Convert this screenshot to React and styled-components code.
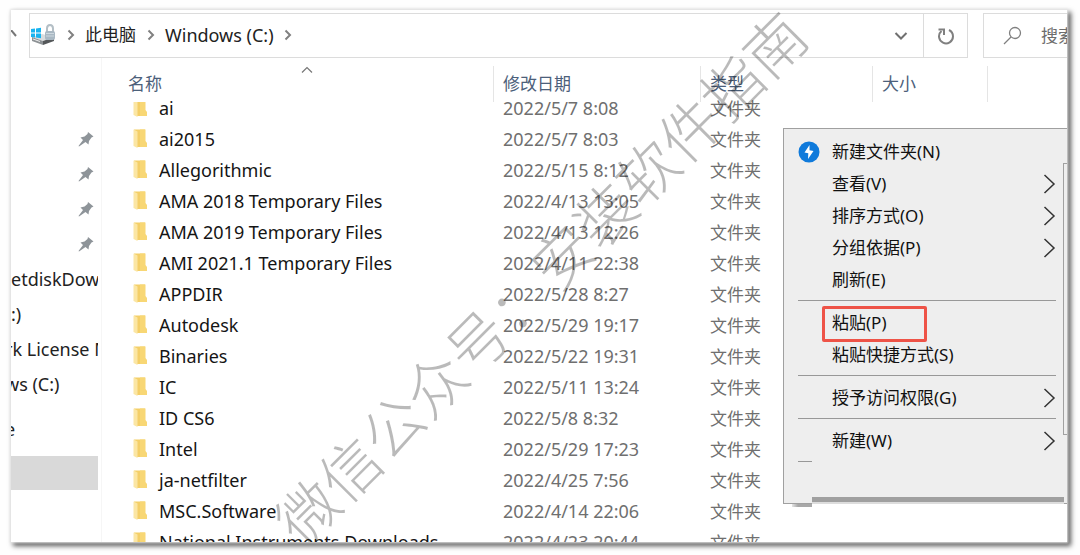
import React from "react";
import styled, { createGlobalStyle } from "styled-components";

const GlobalStyle = createGlobalStyle`
  * {
    box-sizing: border-box;
  }

  body {
    margin: 0;
    background: #fefefe;
    font-family: "Noto Sans", "Noto Sans CJK SC", sans-serif;
  }

  button,
  input {
    margin: 0;
    padding: 0;
    border: 0;
    background: none;
    font: inherit;
    color: inherit;
  }
`;

const Page = styled.div`
  height: 100vh;
  padding: 10px 13px 13px 11px;
  overflow: hidden;
`;

const Window = styled.main`
  position: relative;
  display: flex;
  flex-direction: column;
  height: 100%;
  overflow: hidden;
  background: #fff;
`;

const Frame = styled.div`
  height: 100%;
  box-shadow:
    0 0 2px 1px #e6e6e6,
    3px 3px 5px 1px rgba(0, 0, 0, 0.65);
`;

const Toolbar = styled.div`
  display: flex;
  flex: none;
  height: 48px;
  padding-top: 3px;
`;

const UpArrow = styled.div`
  display: flex;
  align-items: center;
  width: 18px;
  height: 42px;
`;

const AddressBar = styled.nav`
  display: flex;
  flex: 1;
  align-items: center;
  height: 45px;
  border: 1px solid #dcdcdc;
  color: #222;
`;

const Crumb = styled.a`
  padding-bottom: 2px;
  font-size: ${(props) => (props.$latin ? 18 : 17)}px;
  line-height: 24px;
  color: inherit;
  text-decoration: none;
`;

const CrumbGap = styled.span`
  display: flex;
  justify-content: center;
  width: 29px;
  padding-bottom: 2px;
`;

const HistoryButton = styled.button`
  display: flex;
  align-items: center;
  justify-content: center;
  width: 44px;
  height: 43px;
  margin-left: auto;
`;

const RefreshButton = styled(HistoryButton)`
  margin-left: 0;
  border-left: 1px solid #dcdcdc;
`;

const SearchBox = styled.label`
  display: flex;
  align-items: center;
  gap: 19px;
  width: 84px;
  height: 45px;
  margin-left: 15px;
  padding-left: 19px;
  border: 1px solid #dcdcdc;
  border-right: 0;
  overflow: hidden;
`;

const SearchIcon = styled.svg`
  flex: none;
`;

const SearchInput = styled.input`
  width: 60px;
  flex: none;
  font-size: 17px;

  &::placeholder {
    color: #6d6d6d;
    opacity: 1;
  }
`;

const Body = styled.div`
  display: flex;
  flex: 1;
  min-height: 0;
`;

const Sidebar = styled.aside`
  flex: none;
  width: 87px;
  padding-top: 63px;
  overflow: hidden;
`;

const SideRow = styled.div`
  display: flex;
  align-items: center;
  justify-content: ${(props) => (props.$pinned ? "flex-end" : "flex-start")};
  height: ${(props) => (props.$selected ? 34 : 35)}px;
  margin-top: ${(props) => (props.$spaced ? 10 : 0)}px;
  margin-left: ${(props) => (props.$cut ? -6 : 0)}px;
  padding-right: ${(props) => (props.$pinned ? 4 : 0)}px;
  background: ${(props) => (props.$selected ? "#d9d9d9" : "transparent")};
  font-size: 18px;
  white-space: nowrap;
  color: #222;
`;

const FilePane = styled.section`
  flex: 1;
  min-width: 0;
  margin-left: 3px;
  border-left: 1px solid #f6f6f6;
  overflow: hidden;
`;

const FileTable = styled.table`
  width: 100%;
  table-layout: fixed;
  border-collapse: collapse;
`;

const Col = styled.col`
  width: ${(props) => props.$width}px;
`;

const HeadCell = styled.th`
  position: relative;
  height: 35px;
  padding: 17px 0 0 ${(props) => (props.$first ? 26 : 9)}px;
  font-size: 17px;
  font-weight: 400;
  line-height: 18px;
  text-align: left;
  color: #4c607a;

  /* column splitter, reaches down over the first row */
  &::after {
    content: "";
    position: absolute;
    top: 8px;
    right: 0;
    width: 1px;
    height: 36px;
    background: #e5e5e5;
  }

  &:last-child::after {
    display: none;
  }
`;

const SortMark = styled.svg`
  position: absolute;
  top: 8px;
  left: 199px;
`;

const NameCell = styled.td`
  height: 31px;
  padding: 0 0 0 31px;
  font-size: 18px;
  line-height: 31px;
  white-space: nowrap;
  color: #151515;
`;

const NameBox = styled.div`
  display: flex;
  align-items: center;
  gap: 11px;
  height: 31px;
`;

const MetaCell = styled.td`
  height: 31px;
  padding: 0 0 0 9px;
  font-size: ${(props) => (props.$cjk ? 17 : 18)}px;
  line-height: 31px;
  white-space: nowrap;
  color: #6f6f6f;
`;

const Watermark = styled.div`
  position: absolute;
  top: 50%;
  left: 50%;
  transform: translate(-50%, -50%) rotate(-45deg);
  font-family: "Noto Sans CJK SC", sans-serif;
  font-size: 60px;
  font-weight: 300;
  line-height: 60px;
  white-space: nowrap;
  color: rgba(0, 0, 0, 0.27);
  pointer-events: none;
`;

const Menu = styled.div`
  position: absolute;
  top: 118px;
  right: 0;
  width: 284px;
  height: 376px;
  padding-top: 7px;
  border: 1px solid #a0a0a0;
  border-right: 0;
  background: #eee;
`;

const MenuItem = styled.button`
  position: relative;
  display: flex;
  align-items: center;
  width: 100%;
  height: 32px;
  padding-right: 11px;
  font-size: 17px;
  line-height: 32px;
  text-align: left;
  color: #111;
`;

const MenuIcon = styled.span`
  display: flex;
  align-items: center;
  width: 48px;
  padding-left: 14px;
`;

const MenuArrow = styled.svg`
  margin-left: auto;
`;

const Highlight = styled.span`
  position: absolute;
  top: -1px;
  left: 38px;
  width: 105px;
  height: 36px;
  border: 3px solid #ee5347;
  border-radius: 2px;
`;

const MenuLine = styled.hr`
  width: ${(props) => (props.$short ? "14px" : "auto")};
  height: 1px;
  margin: 4px 11px 6px 14px;
  border: 0;
  background: #989898;
`;

const MenuEdge = styled.span`
  position: absolute;
  top: 34px;
  right: 0;
  width: 4px;
  height: 272px;
  border: 1px solid #a0a0a0;
  border-right: 0;
`;

const MenuShadow = styled.span`
  position: absolute;
  bottom: -4px;
  left: 8px;
  width: 20px;
  height: 3px;
  background: linear-gradient(to right, rgba(0, 0, 0, 0.1), #a8a8a8 6px);
`;

const MenuBar = styled.span`
  position: absolute;
  right: 3px;
  bottom: -1px;
  left: 28px;
  height: 7px;
  border-bottom: 2px solid #ddd;
  background: #a0a0a0;
`;

const files = [
  ["ai", "2022/5/7 8:08"],
  ["ai2015", "2022/5/7 8:03"],
  ["Allegorithmic", "2022/5/15 8:12"],
  ["AMA 2018 Temporary Files", "2022/4/13 13:05"],
  ["AMA 2019 Temporary Files", "2022/4/13 12:26"],
  ["AMI 2021.1 Temporary Files", "2022/4/11 22:38"],
  ["APPDIR", "2022/5/28 8:27"],
  ["Autodesk", "2022/5/29 19:17"],
  ["Binaries", "2022/5/22 19:31"],
  ["IC", "2022/5/11 13:24"],
  ["ID CS6", "2022/5/8 8:32"],
  ["Intel", "2022/5/29 17:23"],
  ["ja-netfilter", "2022/4/25 7:56"],
  ["MSC.Software", "2022/4/14 22:06"],
  ["National Instruments Downloads", "2022/4/23 20:44"],
];

const menuGroups = [
  [
    { label: "新建文件夹(N)", icon: true },
    { label: "查看(V)", arrow: true },
    { label: "排序方式(O)", arrow: true },
    { label: "分组依据(P)", arrow: true },
    { label: "刷新(E)" },
  ],
  [{ label: "粘贴(P)", marked: true }, { label: "粘贴快捷方式(S)" }],
  [{ label: "授予访问权限(G)", arrow: true }],
  [{ label: "新建(W)", arrow: true }],
];

const CrumbArrow = () => (
  <svg width="8" height="12" viewBox="0 0 8 12" fill="none">
    <path d="M1.5 1.5L6 6L1.5 10.5" stroke="#808080" strokeWidth="2" />
  </svg>
);

const DriveIcon = () => (
  <svg width="26" height="24" viewBox="0 0 26 24">
    <path d="M2 13L12 10L24 13L13 17Z" fill="#d9dcde" />
    <path d="M2 13L13 17V21L2 17Z" fill="#8d9295" />
    <path d="M13 17L24 13V17L13 21Z" fill="#55585a" />
    <path d="M3 15L10 17.5" stroke="#eee" strokeWidth="1" />
    <path
      d="M17 8V4.5Q17 1 20 1Q23 1 23 4.5V8"
      fill="none"
      stroke="#b4bfc6"
      strokeWidth="2"
    />
    <rect x="15" y="7" width="10" height="9" rx="2" fill="#a9b8c3" />
    <path d="M16 9.5H24M16 12H24" stroke="#cdd8df" strokeWidth="1" />
    <path d="M1 5L5 4.5V8.5H1Z" fill="#18b4f0" />
    <path d="M6 4.4L11 3.8V8.5H6Z" fill="#18b4f0" />
    <path d="M1 9.5H5V13.5L1 13Z" fill="#18b4f0" />
    <path d="M6 9.5H11V14.2L6 13.6Z" fill="#18b4f0" />
  </svg>
);

const PinIcon = () => (
  <svg width="16" height="16" viewBox="0 0 16 16">
    <path
      d="M10 1L15.5 5.5L13.5 6.5L11 10L10.5 13.5L7.5 11L1 15.5L0.5 15L5 9L2.5 6.5L6.5 5.5L9.5 3Z"
      fill="#8e9499"
    />
  </svg>
);

const FolderIcon = ({ clipped }) => (
  <svg width="15" height="22" viewBox="0 0 15 22">
    {clipped ? (
      <>
        <path d="M1 4H12V13L14 15V18H4Z" fill="#f4cf68" />
        <path d="M7 4H12.5V12L14 14V18H7Z" fill="#f8d775" />
        <path d="M0.5 4H4.5V19L0.5 17Z" fill="#fbe6a4" />
      </>
    ) : (
      <>
        <path d="M1 0.5H12V13L14 15V18H4Z" fill="#f4cf68" />
        <path d="M7 0.5H12.5V12L14 14V18H7Z" fill="#f8d775" />
        <path d="M0.5 0.5L4.5 2.5V19L0.5 17Z" fill="#fbe6a4" />
      </>
    )}
  </svg>
);

const BoltIcon = () => (
  <svg width="22" height="22" viewBox="0 0 22 22">
    <circle cx="11" cy="11" r="10.5" fill="#0f7adb" />
    <path d="M11.5 4L6.5 11.5L10.3 12.2L10 18L15.5 10L11.5 9.3Z" fill="#fff" />
  </svg>
);

const App = () => {
  return (
    <>
      <GlobalStyle />
      <Page>
        <Frame>
          <Window>
            <Toolbar>
              <UpArrow>
                <svg width="6" height="8" viewBox="0 0 6 8" fill="none">
                  <path d="M0 0L5 6" stroke="#777" strokeWidth="2" />
                </svg>
              </UpArrow>
              <AddressBar aria-label="地址">
                <DriveIcon />
                <CrumbGap>
                  <CrumbArrow />
                </CrumbGap>
                <Crumb href="#pc">此电脑</Crumb>
                <CrumbGap>
                  <CrumbArrow />
                </CrumbGap>
                <Crumb href="#c" $latin>
                  Windows (C:)
                </Crumb>
                <CrumbGap>
                  <CrumbArrow />
                </CrumbGap>
                <HistoryButton aria-label="历史">
                  <svg width="14" height="10" viewBox="0 0 14 10" fill="none">
                    <path d="M1.5 2L7 7.5L12.5 2" stroke="#707070" strokeWidth="2" />
                  </svg>
                </HistoryButton>
                <RefreshButton aria-label="刷新">
                  <svg width="18" height="18" viewBox="0 0 18 18" fill="none">
                    <path
                      d="M12 3Q16 5 16 9.5A7 7 0 1 1 4.5 4"
                      stroke="#808080"
                      strokeWidth="2"
                    />
                    <path d="M1.5 2.5H7V8" stroke="#808080" strokeWidth="2" />
                  </svg>
                </RefreshButton>
              </AddressBar>
              <SearchBox>
                <SearchIcon width="19" height="19" viewBox="0 0 19 19" fill="none">
                  <circle cx="12" cy="7" r="5.5" stroke="#808080" strokeWidth="1.3" />
                  <path d="M8 11L1 18" stroke="#808080" strokeWidth="1.3" />
                </SearchIcon>
                <SearchInput placeholder="搜索" aria-label="搜索" />
              </SearchBox>
            </Toolbar>

            <Body>
              <Sidebar>
                <SideRow $pinned>
                  <PinIcon />
                </SideRow>
                <SideRow $pinned>
                  <PinIcon />
                </SideRow>
                <SideRow $pinned>
                  <PinIcon />
                </SideRow>
                <SideRow $pinned>
                  <PinIcon />
                </SideRow>
                <SideRow>etdiskDow</SideRow>
                <SideRow>:)</SideRow>
                <SideRow $cut>rk License M</SideRow>
                <SideRow $cut>ws (C:)</SideRow>
                <SideRow $cut $spaced>
                  e
                </SideRow>
                <SideRow $spaced $selected />
              </Sidebar>
              <FilePane>
                <FileTable>
                  <colgroup>
                    <Col $width={392} />
                    <Col $width={207} />
                    <Col $width={172} />
                    <Col $width={115} />
                    <col />
                  </colgroup>
                  <thead>
                    <tr>
                      <HeadCell $first>
                        名称
                        <SortMark width="12" height="8" viewBox="0 0 12 8" fill="none">
                          <path d="M1 6.5L6 1.5L11 6.5" stroke="#777" strokeWidth="1.2" />
                        </SortMark>
                      </HeadCell>
                      <HeadCell>修改日期</HeadCell>
                      <HeadCell>类型</HeadCell>
                      <HeadCell>大小</HeadCell>
                      <HeadCell />
                    </tr>
                  </thead>
                  <tbody>
                    {files.map(([name, date], index) => (
                      <tr key={name}>
                        <NameCell>
                          <NameBox>
                            <FolderIcon clipped={index === 0} />
                            {name}
                          </NameBox>
                        </NameCell>
                        <MetaCell>{date}</MetaCell>
                        <MetaCell $cjk>文件夹</MetaCell>
                        <td />
                        <td />
                      </tr>
                    ))}
                  </tbody>
                </FileTable>
              </FilePane>
            </Body>

            <Watermark>微信公众号：安装软件指南</Watermark>

            <Menu>
              {menuGroups.map((group, index) => (
                <React.Fragment key={group[0].label}>
                  {group.map((item) => (
                    <MenuItem key={item.label}>
                      <MenuIcon>{item.icon && <BoltIcon />}</MenuIcon>
                      {item.label}
                      {item.arrow && (
                        <MenuArrow width="13" height="20" viewBox="0 0 13 20" fill="none">
                          <path d="M1.5 1L11 10L1.5 19" stroke="#333" strokeWidth="1.5" />
                        </MenuArrow>
                      )}
                      {item.marked && <Highlight />}
                    </MenuItem>
                  ))}
                  <MenuLine $short={index === menuGroups.length - 1} />
                </React.Fragment>
              ))}
              <MenuEdge />
              <MenuShadow />
              <MenuBar />
            </Menu>
          </Window>
        </Frame>
      </Page>
    </>
  );
};

export default App;
